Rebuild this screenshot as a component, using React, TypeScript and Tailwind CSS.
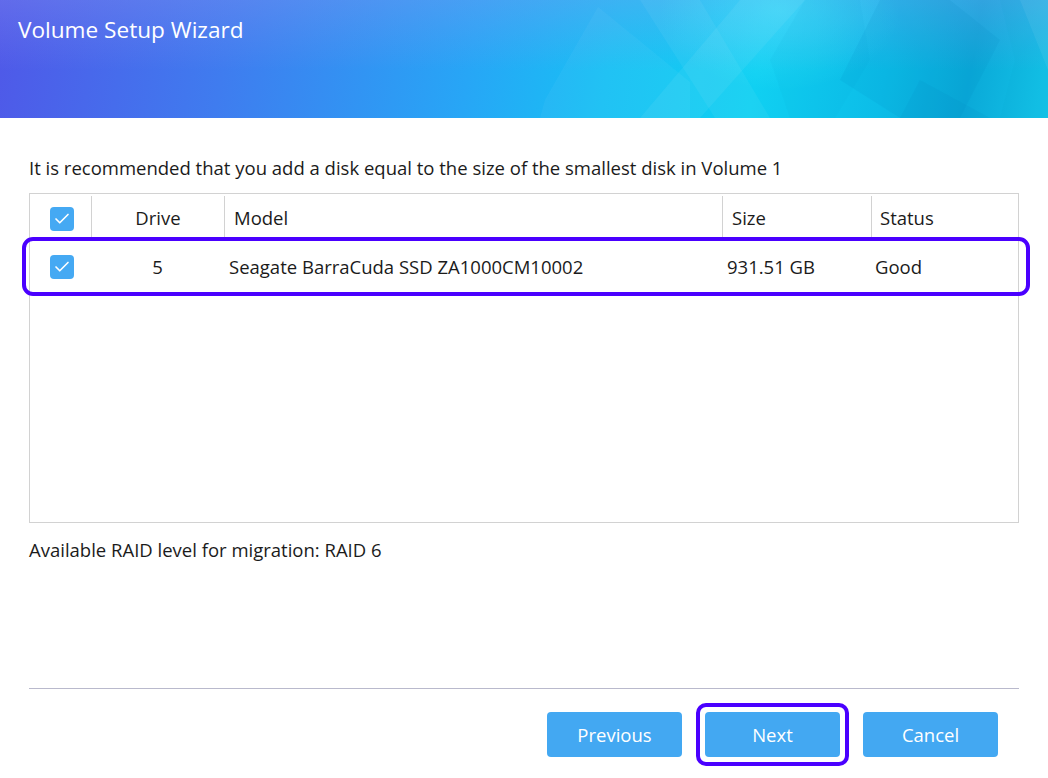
import { Check } from 'lucide-react';

const font = { fontFamily: '"Open Sans", "Noto Sans", sans-serif' };

function Box() {
  return (
    <div className="w-[24px] h-[24px] rounded-[4px] bg-[#45a9f3] flex items-center justify-center">
      <Check className="w-[18px] h-[18px] text-white" strokeWidth={2.2} />
    </div>
  );
}

function HeaderArt() {
  return (
    <svg className="absolute inset-0 w-full h-full" viewBox="0 0 1048 118" preserveAspectRatio="none">
      {/* faint triangles over the gradient */}
      <polygon points="598,7 545,100 540,118 690,118 690,82" fill="#ffffff" opacity="0.04" />
      <polygon points="640,0 700,0 770,118 715,118" fill="#ffffff" opacity="0.05" />
      <polygon points="740,0 805,0 700,118 640,118" fill="#ffffff" opacity="0.06" />
      <polygon points="805,0 860,0 870,60 835,118 790,118 770,60" fill="#0098cc" opacity="0.06" />
      <polygon points="880,0 950,0 1000,40 960,118 900,118 840,80" fill="#0080b8" opacity="0.1" />
      <polygon points="920,80 990,118 900,118" fill="#0078b0" opacity="0.08" />
      <polygon points="1000,0 1048,0 1048,118 1000,118 1015,60" fill="#10a0d0" opacity="0.08" />
      <polygon points="1020,0 1048,0 1048,70" fill="#ffffff" opacity="0.06" />
    </svg>
  );
}

function Btn({ label }: { label: string }) {
  return (
    <div className="w-[135px] h-[45px] rounded-[4px] bg-[#43a8f2] text-white text-[18.5px] flex items-center justify-center">
      {label}
    </div>
  );
}

export default function App() {
  return (
    <div className="w-[1048px] h-[778px] bg-white text-[#1b1b1b] flex flex-col overflow-hidden" style={font}>
      <div className="relative h-[118px] shrink-0 bg-[linear-gradient(100deg,#4f58e8_0%,#3f7cef_22%,#27a6f6_45%,#18c0f4_58%,#10d0f2_72%,#0cbde8_84%,#0aa9d8_92%,#14c4e8_100%)]">
        <div className="absolute inset-0 bg-[linear-gradient(180deg,rgba(140,150,240,0.3)_0%,rgba(140,150,240,0)_60%)]" />
        <div className="absolute inset-0 bg-[radial-gradient(ellipse_120px_80px_at_780px_10px,rgba(80,235,255,0.45),rgba(80,235,255,0))]" />
        <HeaderArt />
        <div className="relative pl-[18px] pt-[13px] text-white text-[22.6px]">Volume Setup Wizard</div>
      </div>

      <div className="flex flex-col px-[29px] pt-[36px] flex-1 text-[18.5px]">
        <p className="leading-[28px]">
          It is recommended that you add a disk equal to the size of the smallest disk in Volume 1
        </p>

        <div className="mt-[11px] h-[330px] border border-[#d2d2d2] relative">
          <div className="flex h-[48px] items-center">
            <div className="w-[61px] flex justify-center pl-[2px] pt-[1px]"><Box /></div>
            <div className="w-[133px] h-[44px] border-l border-[#d2d2d2] flex items-center justify-center">Drive</div>
            <div className="w-[498px] h-[44px] border-l border-[#d2d2d2] flex items-center pl-[9px]">Model</div>
            <div className="w-[149px] h-[44px] border-l border-[#d2d2d2] flex items-center pl-[9px]">Size</div>
            <div className="flex-1 h-[44px] border-l border-[#d2d2d2] flex items-center pl-[8px]">Status</div>
          </div>
          <div className="flex h-[50px] items-center">
            <div className="w-[61px] flex justify-center pl-[2px]"><Box /></div>
            <div className="w-[133px] flex justify-center">5</div>
            <div className="w-[498px] pl-[5px]">Seagate BarraCuda SSD ZA1000CM10002</div>
            <div className="w-[149px] pl-[5px]">931.51 GB</div>
            <div className="flex-1 pl-[4px]">Good</div>
          </div>
          <div className="absolute left-[-8px] right-[-12px] top-[43px] h-[59px] rounded-[11px] border-[4px] border-[#4a00ff]" />
        </div>

        <p className="mt-[13px] leading-[28px]">Available RAID level for migration: RAID 6</p>

        <div className="mt-[124px] h-px bg-[#b9b9cc]" />

        <div className="flex justify-end gap-[23px] pr-[21px] mt-[23px]">
          <Btn label="Previous" />
          <div className="relative">
            <Btn label="Next" />
            <div className="absolute -inset-[9px] rounded-[10px] border-[4px] border-[#4a00ff]" />
          </div>
          <Btn label="Cancel" />
        </div>
      </div>
    </div>
  );
}
